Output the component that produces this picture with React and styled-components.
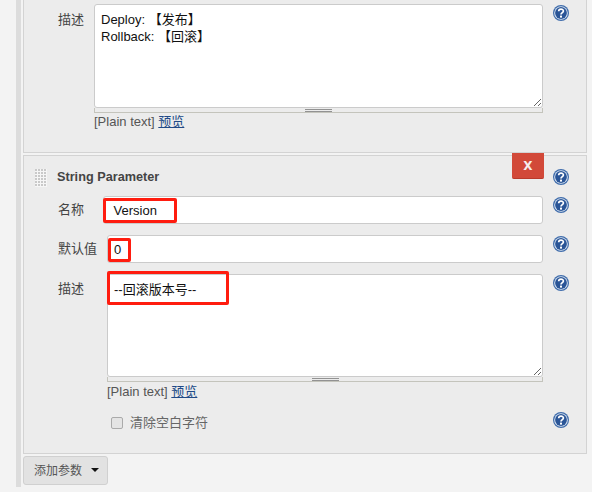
import React from 'react'
import styled, { createGlobalStyle } from 'styled-components'

const FONT = `"Liberation Sans", "Noto Sans CJK SC", sans-serif`

const GlobalStyle = createGlobalStyle`
  html, body {
    margin: 0;
    padding: 0;
    background: #fff;
    overflow: hidden;
  }
`

const Page = styled.div`
  width: 592px;
  height: 492px;
  display: flex;
  overflow: hidden;
  background: #f3f3f3;
  font: 13px/16px ${FONT};
  color: #444;
`

const Rail = styled.div`
  width: 5px;
  height: 487px;
  margin: 0 2px 0 16px;
  background: #dcdcdc;
`

const Column = styled.div`
  width: 564px;
  display: flex;
  flex-direction: column;
  gap: 2px;
`

const Panel = styled.section`
  position: relative;
  box-sizing: border-box;
  height: ${p => p.$height}px;
  padding: ${p => p.$top}px 17px 0 34px;
  background: #ececec;
  border: 1px solid #d3d3d3;
  border-top-width: ${p => (p.$clipped ? 0 : 1)}px;
`

const Header = styled.div`
  display: flex;
  align-items: flex-start;
  height: 17px;
  margin: 0 0 10px -23px;
`

const DragHandle = styled.div`
  width: 12px;
  height: 18px;
  margin-right: 10px;
  background-color: #c9c9c9;
  background-image: linear-gradient(90deg, transparent 2px, #f6f6f6 2px),
    linear-gradient(transparent 2px, #f6f6f6 2px);
  background-size: 3px 3px;
`

const Title = styled.h3`
  flex: 1;
  margin: 0;
  font: bold 12.7px/17px ${FONT};
  color: #444;
`

const DeleteButton = styled.button`
  position: absolute;
  top: -3px;
  right: 42px;
  width: 32px;
  height: 26px;
  padding: 0;
  background: #d24939;
  border: 0;
  border-bottom: 1px solid #b93a2b;
  border-radius: 0 0 2px 2px;
  color: #f6eeee;
  font: bold 12px/24px "DejaVu Sans", sans-serif;
`

const Row = styled.div`
  display: flex;
  align-items: flex-start;
  margin-bottom: ${p => p.$gap || 0}px;
`

const Label = styled.label`
  flex: 0 0 ${p => p.$width}px;
  padding-top: ${p => p.$pad || 0}px;
  line-height: 17px;
  color: #444;
`

const Field = styled.div`
  position: relative;
  flex: 1;
  min-width: 0;
`

const TextInput = styled.input`
  display: block;
  box-sizing: border-box;
  width: 100%;
  height: 28px;
  padding: 0 6px;
  background: #fff;
  border: 1px solid #cbcbcb;
  border-radius: 3px;
  outline: none;
  font: 13px ${FONT};
  color: #111;
`

const TextArea = styled.textarea`
  display: block;
  box-sizing: border-box;
  width: 100%;
  height: ${p => p.$height}px;
  margin: 0;
  padding: 6px 6px 0;
  background: #fff;
  border: 1px solid #cbcbcb;
  border-radius: 3px;
  outline: none;
  resize: vertical;
  overflow: hidden;
  font: 13px/17px ${FONT};
  color: #111;
`

const Grip = styled.div`
  box-sizing: border-box;
  height: 5px;
  display: flex;
  justify-content: center;
  align-items: flex-start;
  padding-top: 1px;
  border: 1px solid #c4c4bc;
  border-top: 0;
`

const GripLines = styled.div`
  box-sizing: border-box;
  width: 27px;
  height: 3px;
  border-top: 1px solid #929292;
  border-bottom: 1px solid #929292;
`

const FormatLine = styled.div`
  height: 16px;
  padding-top: ${p => p.$pad}px;
  line-height: 16px;
  color: #555;
`

const PreviewLink = styled.a`
  color: #204a87;
  text-decoration: underline;
`

const CheckRow = styled.div`
  display: flex;
  align-items: center;
  height: 21px;
  padding-left: 4px;
  color: #666;
`

const Checkbox = styled.input`
  appearance: none;
  box-sizing: border-box;
  width: 12px;
  height: 12px;
  margin: 0 7px 0 0;
  background: #e4e4e4;
  border: 1px solid #aaa;
  border-radius: 2px;
`

const Annotation = styled.div`
  position: absolute;
  box-sizing: border-box;
  left: ${p => p.$left}px;
  top: ${p => p.$top}px;
  width: ${p => p.$width}px;
  height: ${p => p.$height}px;
  border: 3px solid #ff1c0f;
  border-radius: 2px;
  pointer-events: none;
`

const AddButton = styled.button`
  box-sizing: border-box;
  width: 85px;
  height: 29px;
  display: flex;
  align-items: center;
  padding: 0 0 2px 10px;
  background: #e2e2e2;
  border: 1px solid #d0d0d0;
  border-radius: 3px;
  font: 12px ${FONT};
  color: #555;
`

const Caret = styled.span`
  width: 0;
  height: 0;
  margin-left: 9px;
  border-left: 4px solid transparent;
  border-right: 4px solid transparent;
  border-top: 4px solid #111;
`

const HelpSlot = styled.a`
  flex: none;
  display: block;
  width: 16px;
  height: 16px;
  margin: ${p => p.$top || 0}px 0 0 10px;
`

const Help = ({ top }) => (
  <HelpSlot $top={top}>
    <svg width="16" height="16" viewBox="0 0 16 16">
      <circle cx="8" cy="8" r="8" fill="#3f6cab" />
      <circle cx="8" cy="8" r="6.8" fill="#dfe8f3" />
      <circle cx="8" cy="8" r="5.9" fill="#2a5597" />
      <path d="M5.7 6.2 C5.7 3.4 10.4 3.4 10.4 6.1 C10.4 7.7 8 7.7 8 9.6" fill="none" stroke="#fff" strokeWidth="1.7" />
      <rect x="7" y="10.6" width="2" height="2" fill="#fff" />
    </svg>
  </HelpSlot>
)

const App = () => (
  <Page>
    <GlobalStyle />
    <Rail />
    <Column>
      <Panel $clipped $height={153} $top={4}>
        <Row>
          <Label $width={36} $pad={7}>描述</Label>
          <Field>
            <TextArea $height={104} readOnly defaultValue={'Deploy: 【发布】\nRollback: 【回滚】'} />
            <Grip><GripLines /></Grip>
            <FormatLine $pad={1}>[Plain text] <PreviewLink>预览</PreviewLink></FormatLine>
          </Field>
          <Help top={1} />
        </Row>
      </Panel>

      <Panel $height={299} $top={13}>
        <DeleteButton>X</DeleteButton>
        <Header>
          <DragHandle />
          <Title>String Parameter</Title>
          <Help />
        </Header>
        <Row $gap={11}>
          <Label $width={45} $pad={5}>名称</Label>
          <Field>
            <TextInput readOnly defaultValue=" Version" />
            <Annotation $left={0} $top={2} $width={74} $height={25} />
          </Field>
          <Help top={1} />
        </Row>
        <Row $gap={11}>
          <Label $width={49} $pad={5}>默认值</Label>
          <Field>
            <TextInput readOnly defaultValue="0" />
            <Annotation $left={1} $top={3} $width={23} $height={24} />
          </Field>
          <Help top={1} />
        </Row>
        <Row $gap={12}>
          <Label $width={49} $pad={6}>描述</Label>
          <Field>
            <TextArea $height={103} readOnly defaultValue="--回滚版本号--" />
            <Annotation $left={0} $top={-3} $width={122} $height={34} />
            <Grip><GripLines /></Grip>
            <FormatLine $pad={2}>[Plain text] <PreviewLink>预览</PreviewLink></FormatLine>
          </Field>
          <Help top={1} />
        </Row>
        <Row>
          <Label $width={49} />
          <Field>
            <CheckRow>
              <Checkbox type="checkbox" readOnly />
              清除空白字符
            </CheckRow>
          </Field>
          <Help />
        </Row>
      </Panel>

      <AddButton>添加参数<Caret /></AddButton>
    </Column>
  </Page>
)

export default App
